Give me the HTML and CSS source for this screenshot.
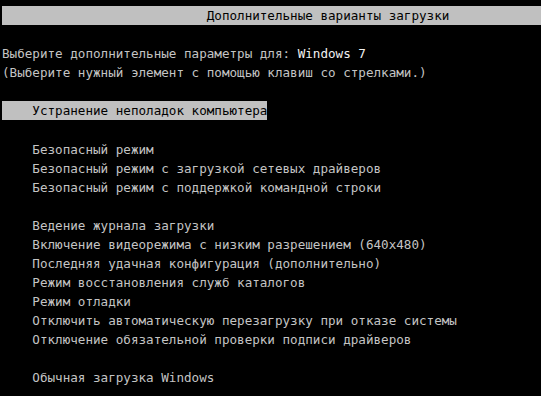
FILE: index.html
```html
<!DOCTYPE html>
<html lang="ru">
<head>
<meta charset="utf-8">
<title>Дополнительные варианты загрузки</title>
<link rel="stylesheet" href="styles.css">
</head>
<body>
<div class="screen">
  <div class="line title">                           Дополнительные варианты загрузки</div>
  <div class="line"> </div>
  <div class="line">Выберите дополнительные параметры для: <span class="bright">Windows 7</span></div>
  <div class="line">(Выберите нужный элемент с помощью клавиш со стрелками.)</div>
  <div class="line"> </div>
  <div class="line"><span class="selected">    Устранение неполадок компьютера</span></div>
  <div class="line"> </div>
  <div class="line">    Безопасный режим</div>
  <div class="line">    Безопасный режим с загрузкой сетевых драйверов</div>
  <div class="line">    Безопасный режим с поддержкой командной строки</div>
  <div class="line"> </div>
  <div class="line">    Ведение журнала загрузки</div>
  <div class="line">    Включение видеорежима с низким разрешением (640x480)</div>
  <div class="line">    Последняя удачная конфигурация (дополнительно)</div>
  <div class="line">    Режим восстановления служб каталогов</div>
  <div class="line">    Режим отладки</div>
  <div class="line">    Отключить автоматическую перезагрузку при отказе системы</div>
  <div class="line">    Отключение обязательной проверки подписи драйверов</div>
  <div class="line"> </div>
  <div class="line">    Обычная загрузка Windows</div>
</div>
</body>
</html>
```
FILE: styles.css
```css
html, body {
  margin: 0;
  padding: 0;
  background: #000;
  width: 541px;
  height: 396px;
  overflow: hidden;
}

.screen {
  padding: 6px 0 0 2px;
  font-family: "DejaVu Sans Mono", "Liberation Mono", monospace;
  font-size: 12.6px;
  color: #c4c4c4;
}

.line {
  height: 19.08px;
  line-height: 19.08px;
  white-space: pre;
}

.title {
  background: #c0c0c0;
  color: #000;
}

.selected {
  display: inline-block;
  background: #c0c0c0;
  color: #000;
}

.bright {
  color: #f2f2f2;
}
```
